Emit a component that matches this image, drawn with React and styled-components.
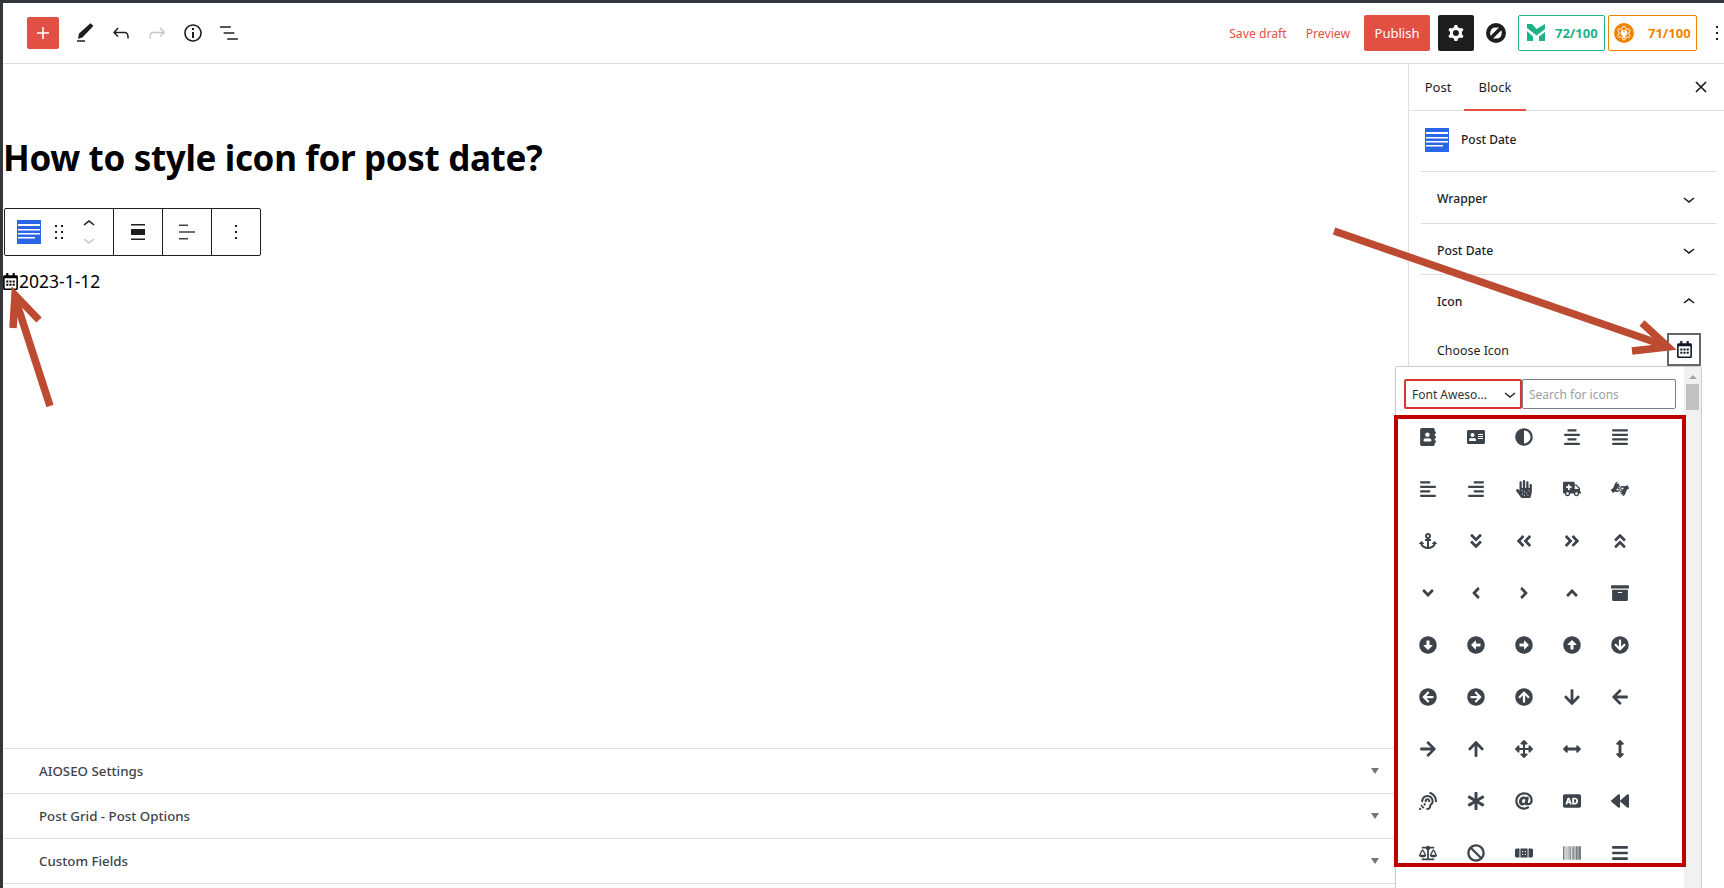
import styled, { createGlobalStyle } from "styled-components";
import {
  FaAddressBook, FaAddressCard, FaAdjust, FaAlignCenter, FaAlignJustify,
  FaAlignLeft, FaAlignRight, FaAllergies, FaAmbulance, FaAmericanSignLanguageInterpreting,
  FaAnchor, FaAngleDoubleDown, FaAngleDoubleLeft, FaAngleDoubleRight, FaAngleDoubleUp,
  FaAngleDown, FaAngleLeft, FaAngleRight, FaAngleUp, FaArchive,
  FaArrowAltCircleDown, FaArrowAltCircleLeft, FaArrowAltCircleRight, FaArrowAltCircleUp, FaArrowCircleDown,
  FaArrowCircleLeft, FaArrowCircleRight, FaArrowCircleUp, FaArrowDown, FaArrowLeft,
  FaArrowRight, FaArrowUp, FaArrowsAlt, FaArrowsAltH, FaArrowsAltV,
  FaAssistiveListeningSystems, FaAsterisk, FaAt, FaAudioDescription, FaBackward,
  FaBalanceScale, FaBan, FaBandAid, FaBarcode, FaBars,
  FaRegCalendarAlt,
} from "react-icons/fa";

const GlobalStyle = createGlobalStyle`
  html, body {
    margin: 0;
    padding: 0;
    height: 100%;
    overflow: hidden;
    background: #fff;
    font-family: "Noto Sans", "Open Sans", sans-serif;
  }
  #root { height: 100%; }
  * { box-sizing: border-box; }
`;

const Screen = styled.div`
  position: relative;
  height: 888px;
  overflow: hidden;
  display: flex;
  flex-direction: column;
  border-top: 3px solid #32373c;
  border-left: 3px solid #32373c;
`;

const MenuAccent = styled.div`
  position: absolute;
  left: -3px;
  top: 91px;
  width: 3px;
  height: 34px;
  background: #e24f43;

  &::after {
    content: "";
    position: absolute;
    left: 0;
    top: 10px;
    border-top: 7px solid transparent;
    border-bottom: 7px solid transparent;
    border-right: 3px solid #fff;
  }
`;

const MenuDark = styled.div`
  position: absolute;
  left: -3px;
  top: 125px;
  width: 3px;
  height: 184px;
  background: #1d2327;
`;

const TopBar = styled.header`
  height: 61px;
  flex: none;
  display: flex;
  align-items: center;
  justify-content: space-between;
  border-bottom: 1px solid #e0e0e0;
  padding: 0 0 1px 24px;
`;

const ToolGroup = styled.div`
  display: flex;
  align-items: center;
`;

const AddButton = styled.div`
  width: 32px;
  height: 32px;
  border-radius: 2px;
  background: #e24f43;
  color: #fff;
  display: flex;
  align-items: center;
  justify-content: center;
  margin-right: 8px;
`;

const ToolIcon = styled.svg`
  width: 24px;
  height: 24px;
  margin: 0 6px;
  fill: ${(p) => p.$tone || "#1e1e1e"};
  flex: none;
`;

const MoreIcon = styled.svg`
  width: 24px;
  height: 24px;
  margin: 0 -5px 0 5px;
  fill: #1e1e1e;
  flex: none;
`;

const TextAction = styled.span`
  font-size: 12.2px;
  padding-top: 1px;
  color: #e24f43;
  margin-right: ${(p) => p.$gap}px;
`;

const PublishButton = styled.div`
  width: 66px;
  height: 36px;
  background: #e24f43;
  border-radius: 2px;
  color: #fff;
  font-size: 13px;
  display: flex;
  align-items: center;
  justify-content: center;
  margin-right: 8px;
`;

const SettingsButton = styled.div`
  width: 36px;
  height: 36px;
  background: #1e1e1e;
  border-radius: 2px;
  display: flex;
  align-items: center;
  justify-content: center;
  margin-right: 12px;
`;

const StudioLogo = styled.svg`
  width: 20px;
  height: 20px;
  margin-right: 12px;
  flex: none;
`;

const ScoreBadge = styled.div`
  height: 36px;
  width: ${(p) => p.$width}px;
  border: 1px solid ${(p) => p.$color};
  border-radius: 2px;
  color: ${(p) => p.$color};
  font-size: 13px;
  font-weight: 700;
  display: flex;
  align-items: center;
  gap: ${(p) => p.$gap}px;
  padding-left: ${(p) => p.$pad}px;
  margin-right: 3px;
`;

const Body = styled.div`
  flex: 1;
  min-height: 0;
  display: flex;
`;

const EditorColumn = styled.main`
  flex: 1;
  min-width: 0;
  display: flex;
  flex-direction: column;
  padding-left: 1px;
`;

const PostTitle = styled.h1`
  margin: 70px 0 0 -1px;
  font-size: 35px;
  letter-spacing: -0.35px;
  line-height: 48px;
  font-weight: 700;
  color: #000;
`;

const BlockToolbar = styled.div`
  margin-top: 26px;
  width: 257px;
  height: 48px;
  display: flex;
  border: 1px solid #1e1e1e;
  border-radius: 2px;
`;

const ToolbarGroup = styled.div`
  width: ${(p) => p.$width}px;
  display: flex;
  align-items: center;
  justify-content: center;
  border-right: ${(p) => (p.$last ? "none" : "1px solid #1e1e1e")};
`;

const LeadGroup = styled(ToolbarGroup)`
  justify-content: flex-start;
  gap: 6px;
  padding-left: 12px;
`;

const MoverStack = styled.div`
  width: 24px;
  display: flex;
  flex-direction: column;
  align-items: center;
`;

const Mover = styled.svg`
  width: 24px;
  height: 16px;
  fill: ${(p) => p.$tone};
`;

const DateLine = styled.div`
  margin-top: 13px;
  margin-left: -2px;
  display: flex;
  align-items: center;
  font-size: 17.5px;
  line-height: 24px;
  color: #000;
`;

const MetaBoxes = styled.section`
  margin-top: auto;
`;

const MetaBox = styled.div`
  height: 45px;
  border-top: 1px solid #e0e0e0;
  display: flex;
  align-items: center;
  justify-content: space-between;
  padding: 0 29px 0 35px;
  font-size: 13.3px;
  font-weight: 500;
  color: #3c434a;
`;

const MetaFoot = styled.div`
  height: 5px;
  border-top: 1px solid #e0e0e0;
`;

const DownTriangle = styled.span`
  width: 0;
  height: 0;
  border-left: 4px solid transparent;
  border-right: 4px solid transparent;
  border-top: 6px solid #6c7781;
`;

const Sidebar = styled.aside`
  position: relative;
  width: 316px;
  flex: none;
  border-left: 1px solid #e0e0e0;
  padding: 0 7px 0 12px;
`;

const TabRow = styled.div`
  height: 47px;
  margin: 0 -7px 0 -12px;
  border-bottom: 1px solid #e0e0e0;
  display: flex;
  align-items: stretch;
  padding-left: 3px;
  position: relative;
`;

const Tab = styled.div`
  width: ${(p) => p.$width}px;
  display: flex;
  align-items: center;
  justify-content: center;
  font-size: 13px;
  color: #1e1e1e;
  margin-bottom: -1px;
  border-bottom: 2px solid ${(p) => (p.$active ? "#e24f43" : "transparent")};
`;

const CloseIcon = styled.svg`
  position: absolute;
  right: 17px;
  top: 17px;
  width: 12px;
  height: 12px;
  stroke: #1e1e1e;
  stroke-width: 1.7;
`;

const BlockCard = styled.div`
  height: 61px;
  display: flex;
  align-items: center;
  gap: 12px;
  padding: 0 4px 2px;
  font-size: 12px;
  font-weight: 500;
  color: #1e1e1e;
  border-bottom: 1px solid #e0e0e0;
`;

const CardLabel = styled.span`
  margin-top: -2px;
`;

const PanelRow = styled.div`
  height: ${(p) => p.$height}px;
  display: flex;
  align-items: center;
  justify-content: space-between;
  padding: 2px 16px 0 16px;
  font-size: 12.2px;
  font-weight: 500;
  color: #1e1e1e;
  border-bottom: ${(p) => (p.$open ? "none" : "1px solid #e0e0e0")};
`;

const PanelChevron = styled.svg`
  width: 24px;
  height: 24px;
  fill: #1e1e1e;
`;

const ChooseRow = styled.div`
  height: 33px;
  margin-top: 7px;
  display: flex;
  align-items: center;
  justify-content: space-between;
  padding: 0 16px;
  font-size: 12.4px;
  color: #1e1e1e;
`;

const ChooseLabel = styled.span`
  padding-top: 2px;
`;

const IconButton = styled.div`
  width: 34px;
  height: 33px;
  border: 2px solid #646970;
  display: flex;
  align-items: center;
  justify-content: center;
  color: #101828;
`;

const Popup = styled.div`
  position: absolute;
  left: -14px;
  top: 302px;
  width: 307px;
  height: 530px;
  background: #fff;
  border: 1px solid #ccc;
  border-radius: 2px 2px 0 0;
`;

const PopupScrollbar = styled.div`
  position: absolute;
  right: 0;
  top: 0;
  bottom: 0;
  width: 17px;
  background: #f1f1f1;
  display: flex;
  flex-direction: column;
  align-items: center;
  padding-top: 8px;
`;

const ScrollUp = styled.span`
  width: 0;
  height: 0;
  border-left: 4px solid transparent;
  border-right: 4px solid transparent;
  border-bottom: 4px solid #a3a3a3;
`;

const ScrollThumb = styled.span`
  margin-top: 5px;
  width: 13px;
  height: 26px;
  background: #c1c1c1;
`;

const PopupControls = styled.div`
  display: flex;
  padding: 12px 0 0 8px;
  height: 48px;
`;

const FontSelect = styled.div`
  width: 118px;
  height: 30px;
  border: 2px solid #dd3333;
  border-radius: 2px;
  display: flex;
  align-items: center;
  justify-content: space-between;
  padding: 0 3px 0 6px;
  font-size: 12px;
  color: #2c3338;
`;

const SearchInput = styled.div`
  width: 154px;
  height: 30px;
  border: 1px solid #7c7f85;
  border-radius: 2px;
  display: flex;
  align-items: center;
  padding-left: 6px;
  font-size: 12px;
  color: #9a9ea6;
`;

const IconFrame = styled.div`
  position: relative;
  margin-left: -2px;
  width: 292px;
  height: 452px;
  border: 4px solid #c00000;
  display: grid;
  grid-template-columns: repeat(5, 48px);
  grid-auto-rows: 52px;
  padding-left: 6px;
  overflow: hidden;
  color: #3c434a;
`;

const IconCell = styled.div`
  display: flex;
  align-items: center;
  justify-content: center;
  height: 36px;

  svg {
    height: 18px;
    width: auto;
  }
`;

const Annotation = styled.svg`
  position: absolute;
  left: 0;
  top: 0;
  pointer-events: none;
`;

const gridIcons = [
  FaAddressBook, FaAddressCard, FaAdjust, FaAlignCenter, FaAlignJustify,
  FaAlignLeft, FaAlignRight, FaAllergies, FaAmbulance, FaAmericanSignLanguageInterpreting,
  FaAnchor, FaAngleDoubleDown, FaAngleDoubleLeft, FaAngleDoubleRight, FaAngleDoubleUp,
  FaAngleDown, FaAngleLeft, FaAngleRight, FaAngleUp, FaArchive,
  FaArrowAltCircleDown, FaArrowAltCircleLeft, FaArrowAltCircleRight, FaArrowAltCircleUp, FaArrowCircleDown,
  FaArrowCircleLeft, FaArrowCircleRight, FaArrowCircleUp, FaArrowDown, FaArrowLeft,
  FaArrowRight, FaArrowUp, FaArrowsAlt, FaArrowsAltH, FaArrowsAltV,
  FaAssistiveListeningSystems, FaAsterisk, FaAt, FaAudioDescription, FaBackward,
  FaBalanceScale, FaBan, FaBandAid, FaBarcode, FaBars,
];

const chevronDown = "M17.5 11.6L12 16l-5.5-4.4.9-1.2L12 14l4.5-3.6 1 1.2z";
const chevronUp = "M6.5 12.4L12 8l5.5 4.4-.9 1.2L12 10l-4.5 3.6-1-1.2z";
const cog = "M10.289 4.836A1 1 0 0 1 11.275 4h1.306a1 1 0 0 1 .987.836l.244 1.466c.787.26 1.503.679 2.108 1.218l1.393-.522a1 1 0 0 1 1.216.437l.653 1.131a1 1 0 0 1-.23 1.273l-1.148.944a6.025 6.025 0 0 1 0 2.435l1.149.946a1 1 0 0 1 .23 1.272l-.653 1.131a1 1 0 0 1-1.216.437l-1.394-.522c-.605.54-1.32.958-2.108 1.218l-.244 1.466a1 1 0 0 1-.987.836h-1.306a1 1 0 0 1-.986-.836l-.244-1.466a5.995 5.995 0 0 1-2.108-1.218l-1.394.522a1 1 0 0 1-1.217-.436l-.653-1.132a1 1 0 0 1 .23-1.272l1.149-.946a6.026 6.026 0 0 1 0-2.435l-1.148-.944a1 1 0 0 1-.23-1.272l.653-1.131a1 1 0 0 1 1.217-.437l1.393.522a5.994 5.994 0 0 1 2.108-1.218l.244-1.466ZM14.929 12a3 3 0 1 1-6 0 3 3 0 0 1 6 0Z";

function BlockGlyph({ size }) {
  return (
    <svg width={size} height={size} viewBox="0 0 24 24" style={{ flex: "none" }}>
      <rect width="24" height="24" fill="#2b66e8" />
      <rect x="1" y="4" width="22" height="2" fill="#fff" />
      <rect x="1" y="9" width="22" height="1.5" fill="#fff" />
      <rect x="1" y="13" width="22" height="1.5" fill="#fff" />
      <rect x="1" y="17" width="17" height="1.5" fill="#fff" />
    </svg>
  );
}

function App() {
  return (
    <>
      <GlobalStyle />
      <Screen>
        <MenuAccent />
        <MenuDark />
        <TopBar>
          <ToolGroup>
            <AddButton>
              <svg width="24" height="24" viewBox="0 0 24 24" fill="#fff">
                <path d="M18 11.200h-5.200V6h-1.600v5.200H6v1.600h5.200V18h1.600v-5.200H18z" />
              </svg>
            </AddButton>
            <ToolIcon viewBox="0 0 24 24">
              <path d="M5 17.800 6 12.500 16 3.500l1.500-1.300 2.800 2.600-1.300 1.700-9.700 10zM4 19.200h8v1.500H4z" />
            </ToolIcon>
            <ToolIcon viewBox="0 0 24 24">
              <path d="M18.300 11.700c-.6-.6-1.400-.9-2.300-.9H6.700l2.900-3.300-1.100-1-4.500 5L8.500 16l1-1-2.700-2.700H16c.5 0 .9.2 1.300.5 1 1 1 3.400 1 4.500v.3h1.500v-.2c0-1.500 0-4.300-1.500-5.700z" />
            </ToolIcon>
            <ToolIcon viewBox="0 0 24 24" $tone="#c8c8c8">
              <path d="M15.600 6.500l-1.100 1 2.900 3.300H8c-.9 0-1.700.3-2.300.9-1.400 1.500-1.400 4.200-1.400 5.600v.2h1.500v-.3c0-1.100 0-3.500 1-4.500.3-.3.7-.5 1.300-.5h9.200L14.500 15l1.100 1.100 4.600-4.600-4.600-5z" />
            </ToolIcon>
            <ToolIcon viewBox="0 0 24 24">
              <path d="M12 3.200c-4.800 0-8.800 3.900-8.800 8.800 0 4.800 3.900 8.800 8.800 8.800 4.800 0 8.800-3.900 8.800-8.800 0-4.800-4-8.800-8.800-8.800zm0 16c-4 0-7.200-3.300-7.200-7.200C4.800 8 8 4.800 12 4.800s7.200 3.300 7.200 7.200c0 4-3.200 7.200-7.200 7.200zM11 17h2v-6h-2v6zm0-8h2V7h-2v2z" />
            </ToolIcon>
            <ToolIcon viewBox="0 0 24 24">
              <path d="M13.800 5.200H3v1.500h10.800V5.200zm-3.600 12v1.500H21v-1.500H10.200zm7.200-6H6.600v1.500h10.800v-1.500z" />
            </ToolIcon>
          </ToolGroup>
          <ToolGroup>
            <TextAction $gap={19}>Save draft</TextAction>
            <TextAction $gap={14}>Preview</TextAction>
            <PublishButton>Publish</PublishButton>
            <SettingsButton>
              <svg width="24" height="24" viewBox="0 0 24 24" fill="#fff">
                <path fillRule="evenodd" clipRule="evenodd" d={cog} />
              </svg>
            </SettingsButton>
            <StudioLogo viewBox="0 0 20 20">
              <circle cx="10" cy="10" r="10" fill="#1e1e1e" />
              <path d="M4.500 8.500a5 5 0 0 1 5-4h3.500l-8.300 8.300a5 5 0 0 1-.2-4.300z" fill="#fff" />
              <path d="M15.500 11.500a5 5 0 0 1-5 4H7l8.300-8.300a5 5 0 0 1 .2 4.300z" fill="#fff" />
            </StudioLogo>
            <ScoreBadge $width={87} $color="#1db389" $pad={8} $gap={10}>
              <svg width="18" height="17" viewBox="0 0 18 17" fill="#1db389" style={{ flex: "none" }}>
                <path d="M0 0h5l4.500 5L18 0v5l-8.500 6.500L0 4z" />
                <path d="M0 7l6 5.500V17H0z" />
                <path d="M18 8v9h-6v-4.500z" />
              </svg>
              72/100
            </ScoreBadge>
            <ScoreBadge $width={89} $color="#f08400" $pad={5} $gap={14}>
              <svg width="20" height="20" viewBox="0 0 24 24" style={{ flex: "none" }}>
                <circle cx="12" cy="12" r="12" fill="#f08400" />
                <path d={cog} fill="none" stroke="#fff" strokeWidth="1.200" />
                <path d="M9 8h1.500v2.500h3V8H15v2.500h1v3l-2.500 2v2.500h-3v-2.500L8 13.500v-3h1z" fill="#fff" />
              </svg>
              71/100
            </ScoreBadge>
            <MoreIcon viewBox="0 0 24 24">
              <path d="M13 19h-2v-2h2v2zm0-6h-2v-2h2v2zm0-6h-2V5h2v2z" />
            </MoreIcon>
          </ToolGroup>
        </TopBar>
        <Body>
          <EditorColumn>
            <PostTitle>How to style icon for post date?</PostTitle>
            <BlockToolbar>
              <LeadGroup $width={109}>
                <BlockGlyph size={24} />
                <svg width="24" height="24" viewBox="0 0 24 24" fill="#1e1e1e" style={{ flex: "none" }}>
                  <path d="M8 7h2V5H8v2zm0 6h2v-2H8v2zm0 6h2v-2H8v2zm6-14v2h2V5h-2zm0 8h2v-2h-2v2zm0 6h2v-2h-2v2z" />
                </svg>
                <MoverStack>
                  <Mover viewBox="0 4 24 16" $tone="#1e1e1e">
                    <path d={chevronUp} />
                  </Mover>
                  <Mover viewBox="0 4 24 16" $tone="#c8c8c8">
                    <path d={chevronDown} />
                  </Mover>
                </MoverStack>
              </LeadGroup>
              <ToolbarGroup $width={49}>
                <svg width="24" height="24" viewBox="0 0 24 24" fill="#1e1e1e">
                  <path d="M5 4h14v1.500H5zM5 9h14v6H5zM5 18.500h14V20H5z" />
                </svg>
              </ToolbarGroup>
              <ToolbarGroup $width={49}>
                <svg width="24" height="24" viewBox="0 0 24 24" fill="#444">
                  <path d="M4 4.500h9v1.500H4zM4 11.200h16v1.500H4zM4 18h9v1.500H4z" />
                </svg>
              </ToolbarGroup>
              <ToolbarGroup $width={48} $last>
                <svg width="24" height="24" viewBox="0 0 24 24" fill="#1e1e1e">
                  <path d="M13 19h-2v-2h2v2zm0-6h-2v-2h2v2zm0-6h-2V5h2v2z" />
                </svg>
              </ToolbarGroup>
            </BlockToolbar>
            <DateLine>
              <FaRegCalendarAlt size={17} color="#000" />
              2023-1-12
            </DateLine>
            <MetaBoxes>
              <MetaBox>AIOSEO Settings<DownTriangle /></MetaBox>
              <MetaBox>Post Grid - Post Options<DownTriangle /></MetaBox>
              <MetaBox>Custom Fields<DownTriangle /></MetaBox>
              <MetaFoot />
            </MetaBoxes>
          </EditorColumn>
          <Sidebar>
            <TabRow>
              <Tab $width={52}>Post</Tab>
              <Tab $width={62} $active>Block</Tab>
              <CloseIcon viewBox="0 0 12 12">
                <path d="M1 1 11 11M11 1 1 11" />
              </CloseIcon>
            </TabRow>
            <BlockCard>
              <BlockGlyph size={24} />
              <CardLabel>Post Date</CardLabel>
            </BlockCard>
            <PanelRow $height={52}>
              Wrapper
              <PanelChevron viewBox="0 0 24 24"><path d={chevronDown} /></PanelChevron>
            </PanelRow>
            <PanelRow $height={51}>
              Post Date
              <PanelChevron viewBox="0 0 24 24"><path d={chevronDown} /></PanelChevron>
            </PanelRow>
            <PanelRow $height={51} $open>
              Icon
              <PanelChevron viewBox="0 0 24 24"><path d={chevronUp} /></PanelChevron>
            </PanelRow>
            <ChooseRow>
              <ChooseLabel>Choose Icon</ChooseLabel>
              <IconButton><FaRegCalendarAlt size={17} /></IconButton>
            </ChooseRow>
            <Popup>
              <PopupScrollbar>
                <ScrollUp />
                <ScrollThumb />
              </PopupScrollbar>
              <PopupControls>
                <FontSelect>
                  Font Aweso...
                  <svg width="14" height="14" viewBox="5 5 14 14" fill="#2c3338">
                    <path d={chevronDown} />
                  </svg>
                </FontSelect>
                <SearchInput>Search for icons</SearchInput>
              </PopupControls>
              <IconFrame>
                {gridIcons.map((Icon, i) => (
                  <IconCell key={i}><Icon /></IconCell>
                ))}
              </IconFrame>
            </Popup>
          </Sidebar>
        </Body>
        <Annotation width="1724" height="888" viewBox="3 3 1724 888">
          <g fill="none" stroke="#bd4b32" strokeWidth="7.5">
            <path d="M1334 231 1666 346" />
            <path d="M1642 323 1668 347 1632 351" />
            <path d="M50 406 15 298" />
            <path d="M13 328 15 295 39 320" />
          </g>
        </Annotation>
      </Screen>
    </>
  );
}

export default App;
